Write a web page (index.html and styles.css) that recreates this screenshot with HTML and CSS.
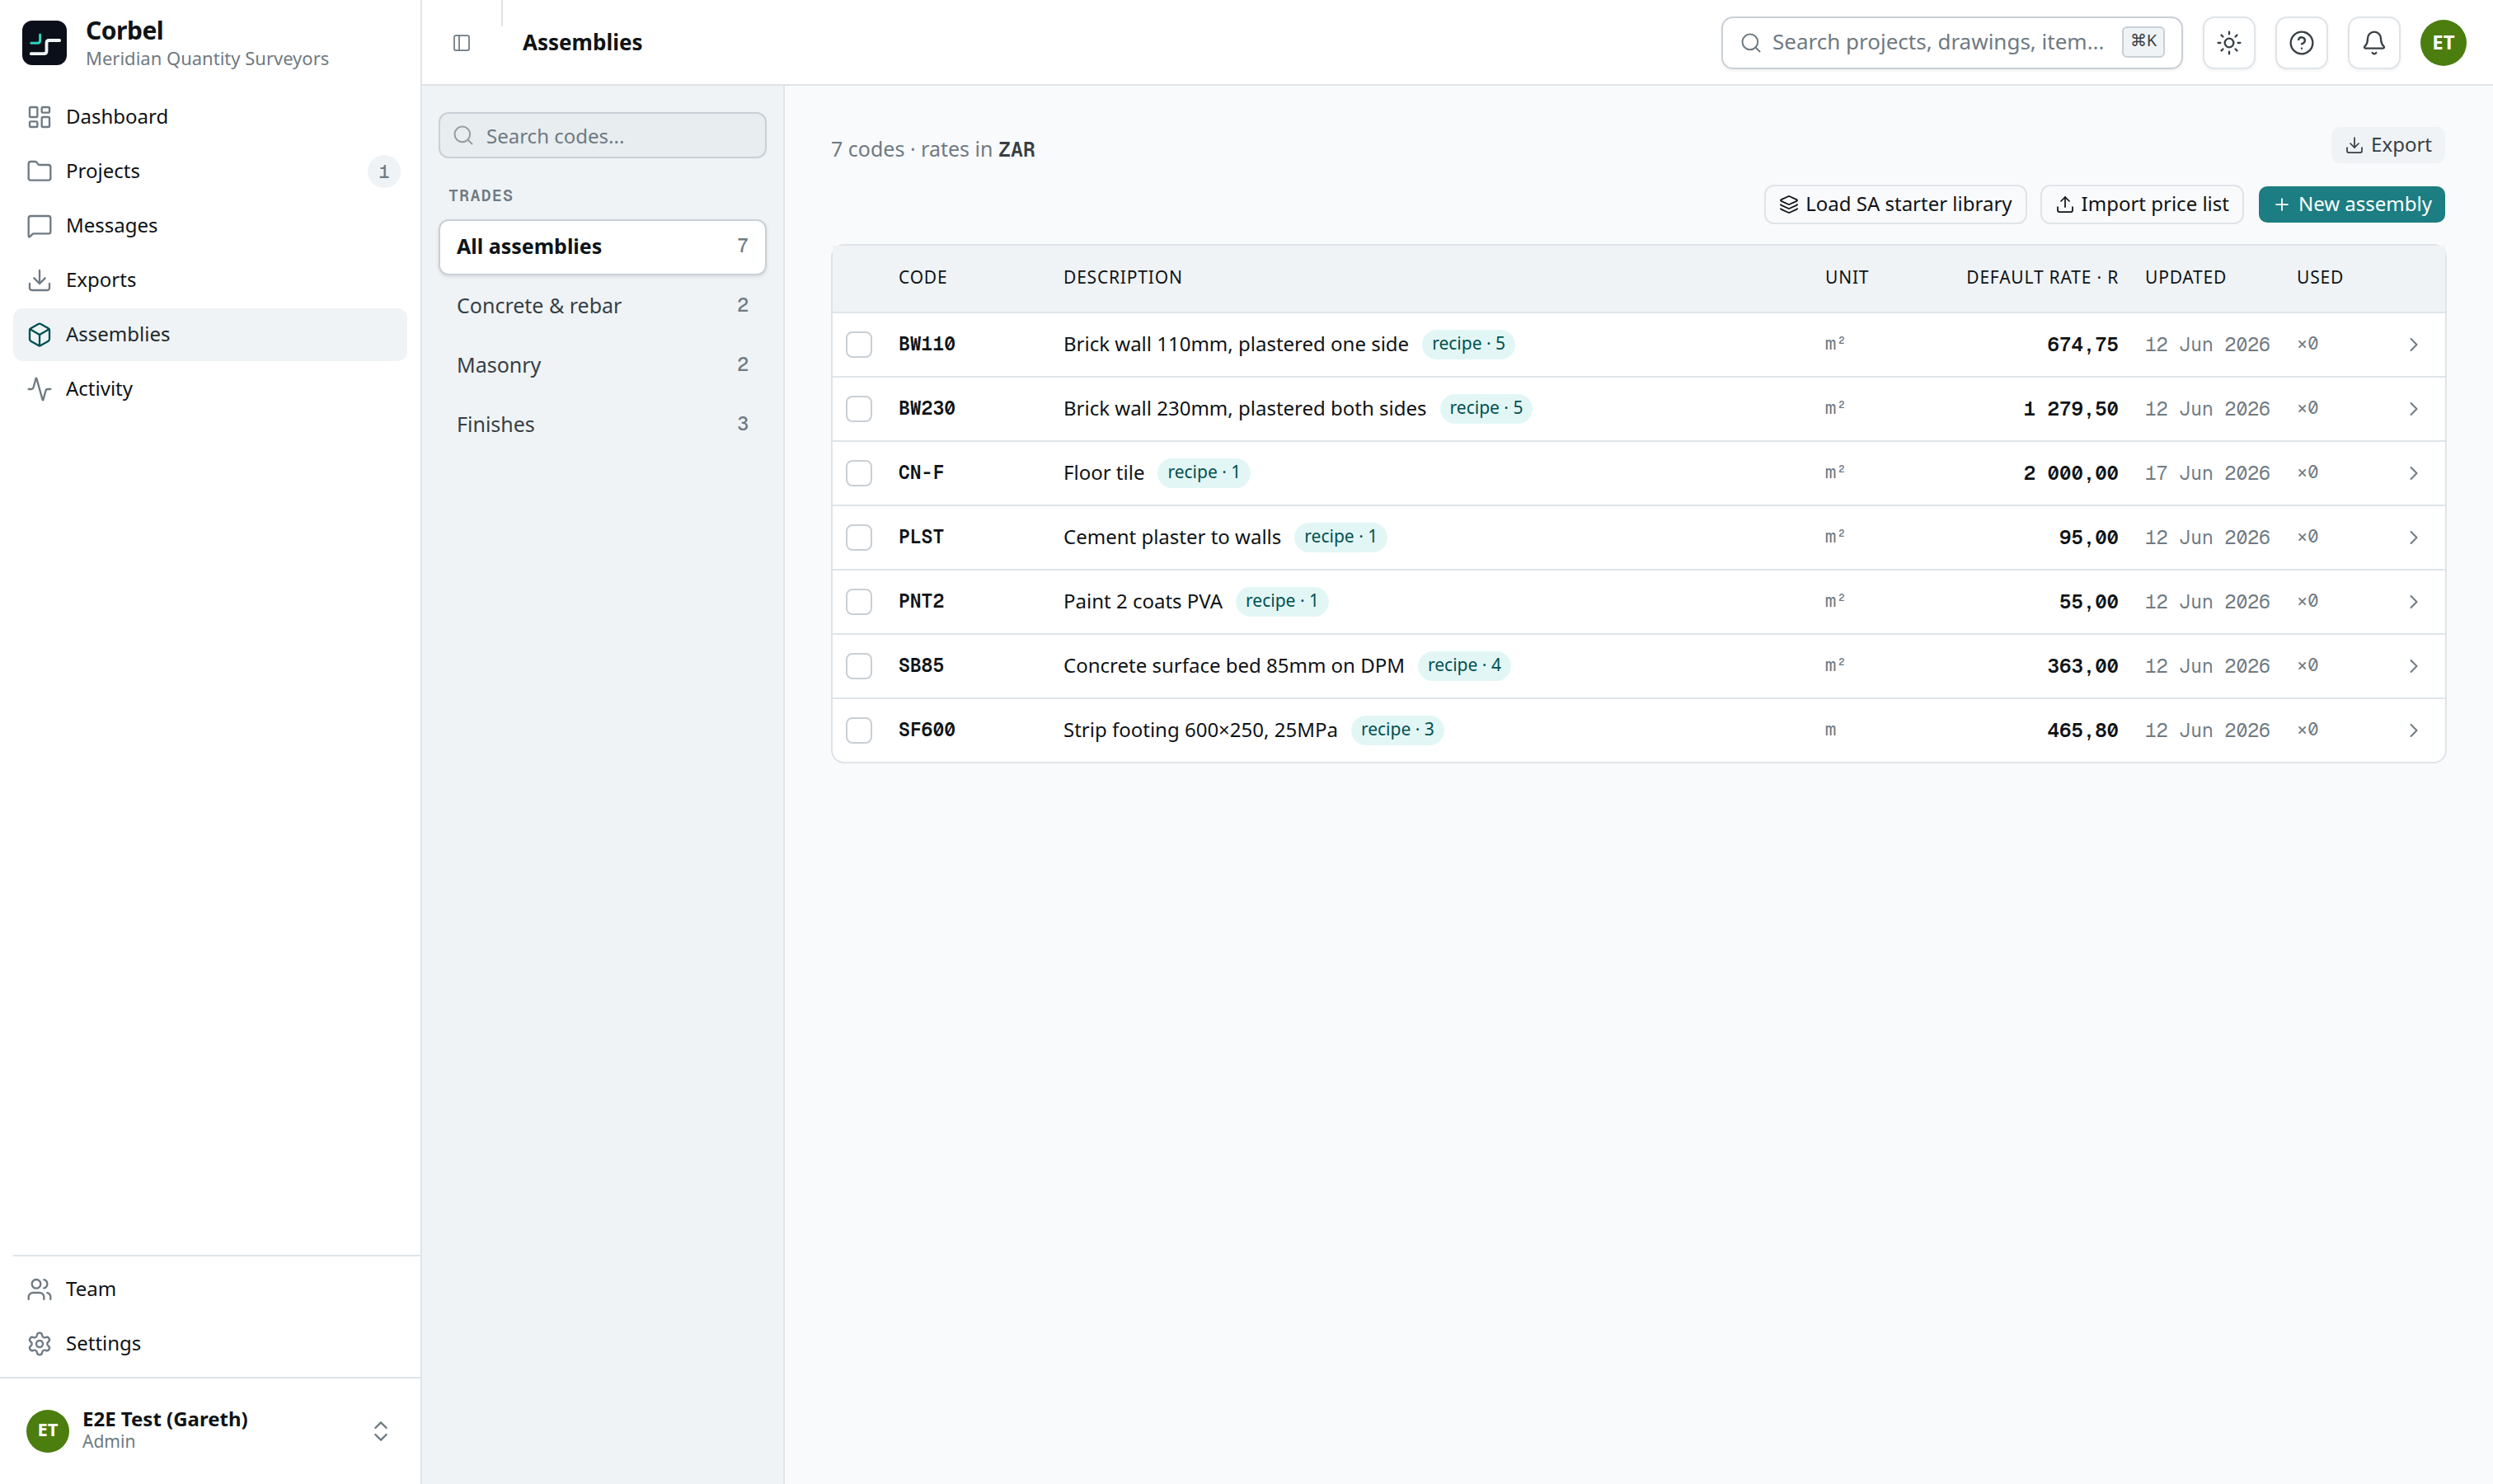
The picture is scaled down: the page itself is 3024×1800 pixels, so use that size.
FILE: index.html
```html
<!DOCTYPE html>
<html lang="en">

<head>
    <meta charset="UTF-8" />
    <meta name="viewport" content="width=device-width, initial-scale=1.0" />
    <title>Assemblies - Corbel</title>
    <link rel="stylesheet" href="styles.css">
</head>

<body>

    <!-- Icon set -->
    <svg class="sprite" xmlns="http://www.w3.org/2000/svg">
        <symbol id="dashboard" viewBox="0 0 24 24">
            <rect x="3" y="3" width="7" height="9" rx="1" />
            <rect x="14" y="3" width="7" height="5" rx="1" />
            <rect x="14" y="12" width="7" height="9" rx="1" />
            <rect x="3" y="16" width="7" height="5" rx="1" />
        </symbol>
        <symbol id="folder" viewBox="0 0 24 24">
            <path d="M20 20a2 2 0 0 0 2-2V8a2 2 0 0 0-2-2h-7.9a2 2 0 0 1-1.69-.9L9.6 3.9A2 2 0 0 0 7.93 3H4a2 2 0 0 0-2 2v13a2 2 0 0 0 2 2Z" />
        </symbol>
        <symbol id="message" viewBox="0 0 24 24">
            <path d="M22 17a2 2 0 0 1-2 2H6.828a2 2 0 0 0-1.414.586l-2.202 2.202A.71.71 0 0 1 2 21.286V5a2 2 0 0 1 2-2h16a2 2 0 0 1 2 2z" />
        </symbol>
        <symbol id="download" viewBox="0 0 24 24">
            <path d="M12 15V3" />
            <path d="M21 15v4a2 2 0 0 1-2 2H5a2 2 0 0 1-2-2v-4" />
            <path d="m7 10 5 5 5-5" />
        </symbol>
        <symbol id="upload" viewBox="0 0 24 24">
            <path d="M12 3v12" />
            <path d="m17 8-5-5-5 5" />
            <path d="M21 15v4a2 2 0 0 1-2 2H5a2 2 0 0 1-2-2v-4" />
        </symbol>
        <symbol id="box" viewBox="0 0 24 24">
            <path d="M21 8a2 2 0 0 0-1-1.73l-7-4a2 2 0 0 0-2 0l-7 4A2 2 0 0 0 3 8v8a2 2 0 0 0 1 1.73l7 4a2 2 0 0 0 2 0l7-4A2 2 0 0 0 21 16Z" />
            <path d="m3.3 7 8.7 5 8.7-5" />
            <path d="M12 22V12" />
        </symbol>
        <symbol id="activity" viewBox="0 0 24 24">
            <path d="M22 12h-2.48a2 2 0 0 0-1.93 1.46l-2.35 8.36a.25.25 0 0 1-.48 0L9.24 2.18a.25.25 0 0 0-.48 0l-2.35 8.36A2 2 0 0 1 4.49 12H2" />
        </symbol>
        <symbol id="users" viewBox="0 0 24 24">
            <path d="M16 21v-2a4 4 0 0 0-4-4H6a4 4 0 0 0-4 4v2" />
            <path d="M16 3.128a4 4 0 0 1 0 7.744" />
            <path d="M22 21v-2a4 4 0 0 0-3-3.87" />
            <circle cx="9" cy="7" r="4" />
        </symbol>
        <symbol id="settings" viewBox="0 0 24 24">
            <path d="M9.671 4.136a2.34 2.34 0 0 1 4.659 0 2.34 2.34 0 0 0 3.319 1.915 2.34 2.34 0 0 1 2.33 4.033 2.34 2.34 0 0 0 0 3.831 2.34 2.34 0 0 1-2.33 4.033 2.34 2.34 0 0 0-3.319 1.915 2.34 2.34 0 0 1-4.659 0 2.34 2.34 0 0 0-3.32-1.915 2.34 2.34 0 0 1-2.33-4.033 2.34 2.34 0 0 0 0-3.831A2.34 2.34 0 0 1 6.35 6.051a2.34 2.34 0 0 0 3.319-1.915" />
            <circle cx="12" cy="12" r="3" />
        </symbol>
        <symbol id="updown" viewBox="0 0 24 24">
            <path d="m7 15 5 5 5-5" />
            <path d="m7 9 5-5 5 5" />
        </symbol>
        <symbol id="panel" viewBox="0 0 24 24">
            <rect x="3" y="3" width="18" height="18" rx="2" />
            <path d="M9 3v18" />
        </symbol>
        <symbol id="search" viewBox="0 0 24 24">
            <circle cx="11" cy="11" r="8" />
            <path d="m21 21-4.34-4.34" />
        </symbol>
        <symbol id="sun" viewBox="0 0 24 24">
            <circle cx="12" cy="12" r="4" />
            <path d="M12 2v2M12 20v2M4.93 4.93l1.41 1.41M17.66 17.66l1.41 1.41M2 12h2M20 12h2M6.34 17.66l-1.41 1.41M19.07 4.93l-1.41 1.41" />
        </symbol>
        <symbol id="help" viewBox="0 0 24 24">
            <circle cx="12" cy="12" r="10" />
            <path d="M9.09 9a3 3 0 0 1 5.83 1c0 2-3 3-3 3" />
            <path d="M12 17h.01" />
        </symbol>
        <symbol id="bell" viewBox="0 0 24 24">
            <path d="M10.268 21a2 2 0 0 0 3.464 0" />
            <path d="M3.262 15.326A1 1 0 0 0 4 17h16a1 1 0 0 0 .74-1.673C19.41 13.956 18 12.499 18 8A6 6 0 0 0 6 8c0 4.499-1.411 5.956-2.738 7.326" />
        </symbol>
        <symbol id="layers" viewBox="0 0 24 24">
            <path d="M12.83 2.18a2 2 0 0 0-1.66 0L2.6 6.08a1 1 0 0 0 0 1.83l8.58 3.91a2 2 0 0 0 1.66 0l8.58-3.9a1 1 0 0 0 0-1.83z" />
            <path d="M2 12a1 1 0 0 0 .58.91l8.6 3.91a2 2 0 0 0 1.65 0l8.58-3.9A1 1 0 0 0 22 12" />
            <path d="M2 17a1 1 0 0 0 .58.91l8.6 3.91a2 2 0 0 0 1.65 0l8.58-3.9A1 1 0 0 0 22 17" />
        </symbol>
        <symbol id="plus" viewBox="0 0 24 24">
            <path d="M5 12h14M12 5v14" />
        </symbol>
        <symbol id="chevron" viewBox="0 0 24 24">
            <path d="m9 18 6-6-6-6" />
        </symbol>
    </svg>

    <div class="app">

        <aside class="sidebar">
            <div class="brand">
                <svg class="logo" viewBox="0 0 54 54">
                    <rect width="54" height="54" rx="12" fill="#0b0f19" />
                    <path d="M10.8 27.3H18.5Q21.6 27.3 21.6 24.2V17" stroke="#2dd4bf" stroke-width="3" />
                    <path d="M10.8 40.2H26.4Q29.5 40.2 29.5 37.1V27.1Q29.5 24 32.6 24H45.2" stroke="#f1f5f9" stroke-width="3.8" />
                </svg>
                <div class="brand-text">
                    <div class="brand-name">Corbel</div>
                    <div class="brand-org">Meridian Quantity Surveyors</div>
                </div>
            </div>

            <nav class="menu">
                <a class="menu-item"><svg class="icon"><use href="#dashboard" /></svg><span class="label">Dashboard</span></a>
                <a class="menu-item"><svg class="icon"><use href="#folder" /></svg><span class="label">Projects</span><span class="count">1</span></a>
                <a class="menu-item"><svg class="icon"><use href="#message" /></svg><span class="label">Messages</span></a>
                <a class="menu-item"><svg class="icon"><use href="#download" /></svg><span class="label">Exports</span></a>
                <a class="menu-item active"><svg class="icon"><use href="#box" /></svg><span class="label">Assemblies</span></a>
                <a class="menu-item"><svg class="icon"><use href="#activity" /></svg><span class="label">Activity</span></a>
            </nav>

            <nav class="menu menu-bottom">
                <a class="menu-item"><svg class="icon"><use href="#users" /></svg><span class="label">Team</span></a>
                <a class="menu-item"><svg class="icon"><use href="#settings" /></svg><span class="label">Settings</span></a>
            </nav>

            <div class="account">
                <div class="avatar avatar-small">ET</div>
                <div class="account-text">
                    <div class="account-name">E2E Test (Gareth)</div>
                    <div class="account-role">Admin</div>
                </div>
                <svg class="icon"><use href="#updown" /></svg>
            </div>
        </aside>

        <div class="page">
            <header class="topbar">
                <svg class="icon toggle"><use href="#panel" /></svg>
                <span class="divider"></span>
                <h1>Assemblies</h1>
                <div class="global-search">
                    <svg class="icon"><use href="#search" /></svg>
                    <span class="label">Search projects, drawings, item...</span>
                    <kbd>⌘K</kbd>
                </div>
                <button class="icon-btn"><svg class="icon"><use href="#sun" /></svg></button>
                <button class="icon-btn"><svg class="icon"><use href="#help" /></svg></button>
                <button class="icon-btn"><svg class="icon"><use href="#bell" /></svg></button>
                <div class="avatar">ET</div>
            </header>

            <div class="body">
                <aside class="rail">
                    <div class="code-search">
                        <svg class="icon"><use href="#search" /></svg>
                        <span>Search codes...</span>
                    </div>
                    <div class="rail-title">TRADES</div>
                    <div class="trade selected">All assemblies<span>7</span></div>
                    <div class="trade">Concrete &amp; rebar<span>2</span></div>
                    <div class="trade">Masonry<span>2</span></div>
                    <div class="trade">Finishes<span>3</span></div>
                </aside>

                <main class="content">
                    <div class="summary">
                        <p>7 codes · rates in <b>ZAR</b></p>
                        <button class="btn btn-soft"><svg class="icon"><use href="#download" /></svg><span class="label">Export</span></button>
                    </div>
                    <div class="actions">
                        <button class="btn btn-outline"><svg class="icon"><use href="#layers" /></svg><span class="label">Load SA starter library</span></button>
                        <button class="btn btn-outline"><svg class="icon"><use href="#upload" /></svg><span class="label">Import price list</span></button>
                        <button class="btn btn-primary"><svg class="icon"><use href="#plus" /></svg><span class="label">New assembly</span></button>
                    </div>

                    <div class="table-card">
                        <table>
                            <colgroup>
                                <col class="col-check">
                                <col class="col-code">
                                <col>
                                <col class="col-unit">
                                <col class="col-rate">
                                <col class="col-updated">
                                <col class="col-used">
                                <col class="col-open">
                            </colgroup>
                            <thead>
                                <tr>
                                    <th></th>
                                    <th>CODE</th>
                                    <th>DESCRIPTION</th>
                                    <th>UNIT</th>
                                    <th class="rate">DEFAULT RATE · R</th>
                                    <th>UPDATED</th>
                                    <th>USED</th>
                                    <th></th>
                                </tr>
                            </thead>
                            <tbody id="rows"></tbody>
                        </table>
                    </div>
                </main>
            </div>
        </div>
    </div>

    <script>
        const assemblies = [
            ["BW110", "Brick wall 110mm, plastered one side", 5, "m²", "674,75", "12 Jun 2026"],
            ["BW230", "Brick wall 230mm, plastered both sides", 5, "m²", "1 279,50", "12 Jun 2026"],
            ["CN-F", "Floor tile", 1, "m²", "2 000,00", "17 Jun 2026"],
            ["PLST", "Cement plaster to walls", 1, "m²", "95,00", "12 Jun 2026"],
            ["PNT2", "Paint 2 coats PVA", 1, "m²", "55,00", "12 Jun 2026"],
            ["SB85", "Concrete surface bed 85mm on DPM", 4, "m²", "363,00", "12 Jun 2026"],
            ["SF600", "Strip footing 600×250, 25MPa", 3, "m", "465,80", "12 Jun 2026"]
        ];

        document.getElementById("rows").innerHTML = assemblies.map(([code, name, parts, unit, rate, updated]) => `
            <tr>
                <td class="check"><span class="checkbox"></span></td>
                <td class="code">${code}</td>
                <td><div class="desc"><span class="label">${name}</span><span class="recipe">recipe · ${parts}</span></div></td>
                <td class="small">${unit}</td>
                <td class="rate">${rate}</td>
                <td class="updated">${updated}</td>
                <td class="small">×0</td>
                <td class="open"><svg class="icon"><use href="#chevron" /></svg></td>
            </tr>`).join("");
    </script>

</body>

</html>
```
FILE: styles.css
```css
* {
    box-sizing: border-box;
}

body {
    margin: 0;
    font-family: "Noto Sans", sans-serif;
    font-size: 24px;
    color: #0f1316;
    background: #f9fafc;
}

button {
    font: inherit;
    color: inherit;
}

.sprite {
    display: none;
}

.icon {
    width: 32px;
    height: 32px;
    flex: none;
    fill: none;
    stroke: currentColor;
    stroke-width: 1.75;
    stroke-linecap: round;
    stroke-linejoin: round;
}

/* lifts text so it sits level with the icon beside it */
.label {
    padding-bottom: 3px;
}

.app {
    display: flex;
    height: 1800px;
}

/* Sidebar */
.sidebar {
    width: 512px;
    flex: none;
    display: flex;
    flex-direction: column;
    background: #fff;
    border-right: 2px solid #dfe4e8;
}

.brand {
    display: flex;
    align-items: center;
    gap: 23px;
    height: 104px;
    padding-left: 27px;
}

.logo {
    width: 54px;
    height: 54px;
    fill: none;
    stroke-linecap: round;
}

.brand-name {
    font-size: 30px;
    font-weight: 700;
    line-height: 35px;
    letter-spacing: -0.5px;
}

.brand-org {
    font-size: 22px;
    line-height: 32px;
    color: #6f7a82;
}

.menu {
    display: flex;
    flex-direction: column;
    gap: 2px;
    padding: 6px 16px;
}

.menu-item {
    display: flex;
    align-items: center;
    gap: 16px;
    height: 64px;
    padding: 0 8px 0 16px;
    border-radius: 12px;
}

.menu-item .icon {
    color: #6f7a82;
}

.menu-item.active {
    background: #eff3f6;
    color: #20282d;
}

.menu-item.active .icon {
    color: #00504f;
}

.count {
    width: 40px;
    height: 40px;
    margin-left: auto;
    border-radius: 50%;
    background: #eff3f6;
    color: #6f7a82;
    font-family: "Geist Mono", "Liberation Mono", monospace;
    font-size: 22px;
    font-weight: 500;
    line-height: 40px;
    text-align: center;
}

.menu-bottom {
    margin: auto 0 0 16px;
    padding: 8px 16px 8px 0;
    border-top: 2px solid #dfe4e8;
}

.account {
    display: flex;
    align-items: center;
    gap: 16px;
    height: 130px;
    padding: 0 32px;
    border-top: 2px solid #dfe4e8;
}

.account .icon {
    margin-left: auto;
    color: #6f7a82;
}

.account-text {
    padding-bottom: 4px;
}

.account-name {
    font-weight: 700;
    line-height: 28px;
}

.account-role {
    font-size: 21px;
    line-height: 26px;
    color: #6f7a82;
}

.avatar {
    width: 56px;
    height: 56px;
    flex: none;
    border-radius: 50%;
    background: #4c7d0f;
    color: #fff;
    font-size: 24px;
    font-weight: 700;
    line-height: 53px;
    text-align: center;
}

.avatar-small {
    width: 52px;
    height: 52px;
    font-size: 22px;
    line-height: 47px;
}

/* Top bar */
.page {
    flex: 1;
    display: flex;
    flex-direction: column;
    min-width: 0;
}

.topbar {
    display: flex;
    align-items: center;
    gap: 24px;
    height: 104px;
    padding: 2px 32px 0 36px;
    background: #fff;
    border-bottom: 2px solid #dfe4e8;
}

.toggle {
    width: 24px;
    height: 24px;
    color: #6f7a82;
}

.divider {
    align-self: flex-start;
    width: 2px;
    height: 32px;
    margin: -2px 0 0 12px;
    background: #dfe4e8;
}

h1 {
    margin: 0 auto 0 0;
    padding-bottom: 3px;
    font-size: 26px;
    line-height: 36px;
}

.global-search {
    display: flex;
    align-items: center;
    gap: 12px;
    width: 560px;
    height: 64px;
    padding: 0 20px;
    border: 2px solid #c9cfd6;
    border-radius: 14px;
    box-shadow: 0 2px 4px rgba(15, 19, 22, 0.06);
    color: #6f7a82;
    font-size: 26px;
}

.global-search .label {
    padding-bottom: 4px;
}

.global-search .icon {
    width: 28px;
    height: 28px;
}

kbd {
    width: 52px;
    height: 38px;
    margin: -2px 0 0 auto;
    border: 2px solid #c9cfd6;
    border-radius: 6px;
    background: #eff3f6;
    color: #363f45;
    font-family: "Noto Sans", sans-serif;
    font-size: 20px;
    line-height: 29px;
    text-align: center;
}

.icon-btn {
    display: flex;
    align-items: center;
    justify-content: center;
    width: 64px;
    height: 64px;
    padding: 0;
    border: 2px solid #dfe4e8;
    border-radius: 14px;
    background: #fff;
    box-shadow: 0 2px 4px rgba(15, 19, 22, 0.05);
    color: #363f45;
}

/* Trades rail */
.body {
    flex: 1;
    display: flex;
}

.rail {
    width: 440px;
    flex: none;
    padding: 32px 20px;
    background: #eff3f6;
    border-right: 2px solid #dfe4e8;
}

.code-search {
    display: flex;
    align-items: center;
    gap: 14px;
    height: 56px;
    padding: 0 14px;
    border: 2px solid #c9cfd6;
    border-radius: 12px;
    background: #e8edef;
    color: #6f7a82;
}

.code-search .icon {
    width: 28px;
    height: 28px;
    color: #969da3;
}

.rail-title {
    margin: 32px 0 16px 12px;
    font-family: "Geist Mono", "Liberation Mono", monospace;
    font-size: 20px;
    font-weight: 600;
    line-height: 26px;
    letter-spacing: 1.2px;
    color: #6f7a82;
}

.trade {
    display: flex;
    align-items: center;
    justify-content: space-between;
    height: 68px;
    margin-bottom: 4px;
    padding: 0 20px 4px;
    border: 2px solid transparent;
    border-radius: 12px;
    color: #363f45;
    font-size: 25px;
}

.trade span {
    font-family: "Geist Mono", "Liberation Mono", monospace;
    font-size: 23px;
    font-weight: 500;
    color: #6f7a82;
}

.trade.selected {
    border-color: #c9cfd6;
    background: #fff;
    box-shadow: 0 2px 4px rgba(15, 19, 22, 0.1);
    color: #0f1316;
    font-weight: 700;
}

/* Content */
.content {
    flex: 1;
    padding: 48px 56px;
}

.summary {
    display: flex;
    justify-content: space-between;
    height: 72px;
    color: #6f7a82;
}

.summary p {
    margin: 11px 0 0;
    font-size: 25px;
    line-height: 34px;
}

.summary b {
    font-family: "Geist Mono", "Liberation Mono", monospace;
    font-weight: 600;
    color: #363f45;
}

.actions {
    display: flex;
    justify-content: flex-end;
    gap: 16px;
    margin-bottom: 24px;
}

.btn {
    display: flex;
    align-items: center;
    gap: 8px;
    height: 48px;
    padding: 0 16px;
    border: 2px solid transparent;
    border-radius: 12px;
    background-clip: padding-box;
}

.btn .icon {
    width: 24px;
    height: 24px;
}

.btn-soft {
    background-color: #eff3f6;
    color: #363f45;
}

.btn-outline {
    border-color: #dfe4e8;
    background-color: #f9fafc;
}

.btn-primary {
    background-color: #1c7d82;
    color: #fff;
}

/* Table */
.table-card {
    border: 2px solid #dfe4e8;
    border-radius: 16px;
    background: #fff;
}

table {
    width: 100%;
    table-layout: fixed;
    border-collapse: separate;
    border-spacing: 0;
}

.col-check {
    width: 64px;
}

.col-code {
    width: 200px;
}

.col-unit {
    width: 144px;
}

.col-rate {
    width: 244px;
}

.col-updated {
    width: 184px;
}

.col-used {
    width: 110px;
}

.col-open {
    width: 86px;
}

th {
    height: 82px;
    padding: 0 16px 4px;
    border-bottom: 2px solid #dfe4e8;
    background: #eff3f6;
    font-size: 21px;
    font-weight: 400;
    letter-spacing: 0.8px;
    text-align: left;
    white-space: nowrap;
}

td {
    height: 78px;
    padding: 0 16px;
    border-bottom: 2px solid #dfe4e8;
    white-space: nowrap;
}

tr:last-child td {
    height: 76px;
    border-bottom: none;
}

th.rate,
td.rate {
    text-align: right;
}

.code,
td.rate,
.updated,
.small {
    font-family: "Geist Mono", "Liberation Mono", monospace;
}

.code,
td.rate {
    padding-bottom: 2px;
    font-weight: 600;
}

.code,
.updated {
    font-size: 23px;
}

.updated {
    color: #6f7a82;
}

.small {
    padding-bottom: 4px;
    font-size: 22px;
    color: #6f7a82;
}

.checkbox {
    display: block;
    width: 32px;
    height: 32px;
    border: 2px solid #c9cfd6;
    border-radius: 8px;
}

.desc {
    display: flex;
    align-items: center;
    gap: 16px;
}

.recipe {
    height: 36px;
    padding: 0 12px;
    border-radius: 18px;
    background: #e3f6f6;
    color: #00504f;
    font-size: 21px;
    line-height: 32px;
}

.open .icon {
    display: block;
    width: 28px;
    height: 28px;
    margin-left: auto;
    margin-right: 8px;
    color: #6f7a82;
}
```
